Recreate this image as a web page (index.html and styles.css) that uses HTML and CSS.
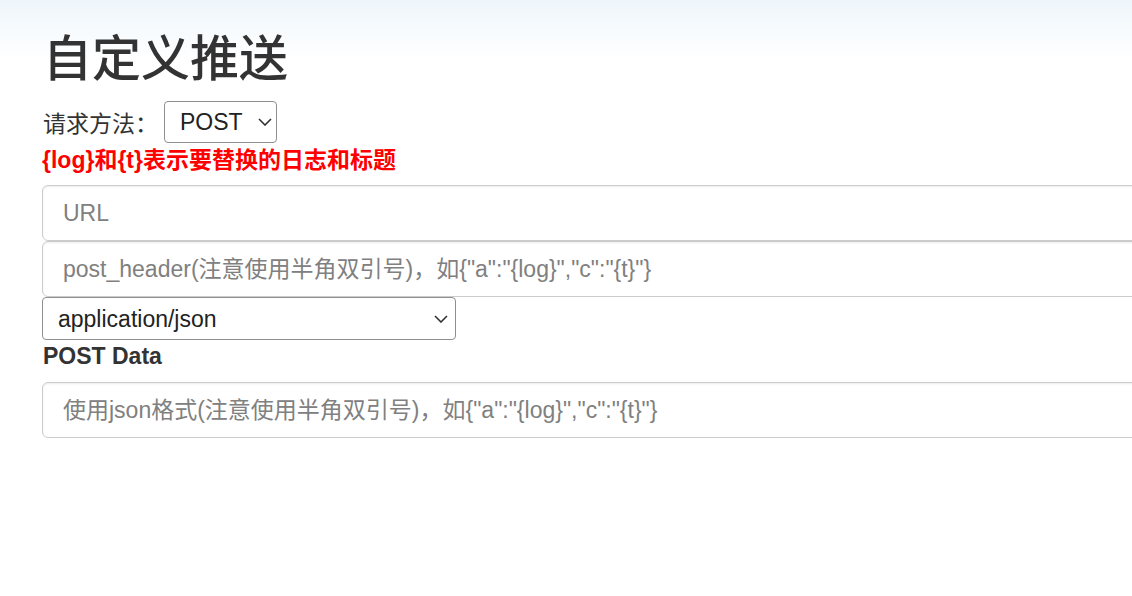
FILE: index.html
```html
<!DOCTYPE html>
<html>
<head>
	<meta charset="utf-8">
	<title>自定义推送</title>
	<link rel="stylesheet" href="styles.css">
</head>
<body>
	<div class="page">
		<h1 class="title">自定义推送</h1>
		<div class="method-row">
			<label for="method">请求方法：</label>
			<select id="method" class="method-select">
				<option>POST</option>
				<option>GET</option>
			</select>
		</div>
		<p class="hint">{log}和{t}表示要替换的日志和标题</p>
		<input class="field" type="text" placeholder="URL">
		<input class="field" type="text" placeholder="post_header(注意使用半角双引号)，如{&quot;a&quot;:&quot;{log}&quot;,&quot;c&quot;:&quot;{t}&quot;}">
		<select class="type-select">
			<option>application/json</option>
			<option>application/x-www-form-urlencoded</option>
		</select>
		<div class="data-label">POST Data</div>
		<input class="field" type="text" placeholder="使用json格式(注意使用半角双引号)，如{&quot;a&quot;:&quot;{log}&quot;,&quot;c&quot;:&quot;{t}&quot;}">
	</div>
</body>
</html>
```

FILE: styles.css
```css
html {
	overflow: hidden;
}
body {
	margin: 0;
	min-height: 596px;
	font-family: "Liberation Sans", "Noto Sans CJK SC", sans-serif;
	color: #333;
	background: linear-gradient(to bottom, #eef6fb 0, #ffffff 60px) no-repeat, #fff;
}
.page {
	padding: 25px 0 0 42px;
	display: flex;
	flex-direction: column;
	align-items: flex-start;
}
.title {
	margin: 0 0 0 1px;
	font-size: 49px;
	font-weight: 500;
	line-height: 68px;
}
.method-row {
	display: flex;
	align-items: center;
	gap: 6px;
	margin: 8px 0 0 1px;
	font-size: 23px;
}
select {
	appearance: none;
	box-sizing: border-box;
	font-family: inherit;
	font-size: 23px;
	color: #222;
	background-color: #fff;
	background-image: url("data:image/svg+xml,%3Csvg xmlns='http://www.w3.org/2000/svg' width='14' height='8' viewBox='0 0 14 8'%3E%3Cpath d='M1 1l6 6 6-6' fill='none' stroke='%23333' stroke-width='1.6'/%3E%3C/svg%3E");
	background-repeat: no-repeat;
	background-size: 14px 8px;
	border: 1px solid #8f8f8f;
	border-radius: 4px;
}
.method-select {
	width: 113px;
	height: 42px;
	padding: 0 0 0 15px;
	background-position: right 4px center;
}
.hint {
	margin: 3px 0 11px 0;
	font-size: 23px;
	font-weight: bold;
	line-height: 28px;
	color: #f00;
}
.field {
	box-sizing: border-box;
	width: 1120px;
	height: 56px;
	padding: 0 20px;
	font-family: inherit;
	font-size: 23px;
	color: #333;
	border: 1px solid #ccc;
	border-radius: 6px;
	box-shadow: inset 0 1px 2px rgba(0, 0, 0, 0.08);
}
.field::placeholder {
	color: #808080;
}
.type-select {
	width: 414px;
	height: 43px;
	padding: 0 0 0 15px;
	background-position: right 7px center;
}
.data-label {
	margin: 4px 0 14px 1px;
	font-size: 23px;
	font-weight: bold;
	line-height: 24px;
}
```
